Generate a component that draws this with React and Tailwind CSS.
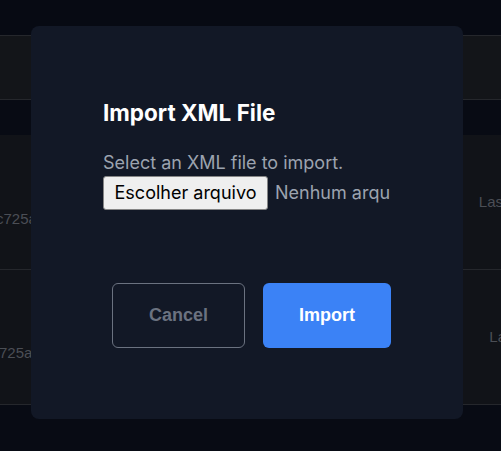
export default function App() {
  const bgText = "text-[#4b4e55] text-[15px] [font-family:'Liberation_Sans',Arial,sans-serif]";
  return (
    <div className="relative w-[501px] h-[451px] overflow-hidden bg-[#080b14] [font-family:Inter,'Noto_Sans',sans-serif]">
      {/* background page */}
      <div className="flex flex-col">
        <div className="h-[36px] bg-[#070a13] border-b border-[#25272c]" />
        <div className="h-[64px] bg-[#131519] border-b border-[#25272c]" />
        <div className="h-[35px] bg-[#080b14]" />
        <div className="h-[135px] bg-[#111318] border-b border-[#25272c] flex items-center justify-between">
          <span className={`${bgText} -ml-[4px] mt-[34px]`}>c725a</span>
          <span className={`${bgText} -mr-[2px]`}>Las</span>
        </div>
        <div className="h-[135px] bg-[#111318] border-b border-[#25272c] flex items-center justify-between">
          <span className={`${bgText} -ml-[1px] mt-[32px]`}>725a</span>
          <span className={`${bgText} -mr-[5px]`}>La</span>
        </div>
        <div className="flex-1 h-[46px] bg-[#0f121a]" />
      </div>

      {/* modal */}
      <div className="absolute left-[31px] top-[26px] w-[432px] h-[393px] rounded-lg bg-[#121826] px-[72px] pt-[71px]">
        <h2 className="text-[22.5px] leading-[31.5px] font-bold text-white">Import XML File</h2>
        <p className="mt-[20px] text-[18px] leading-[27px] text-[#9ca3af]">Select an XML file to import.</p>
        <div className="flex items-center w-[287px] overflow-hidden whitespace-nowrap">
          <span className="shrink-0 w-[165px] h-[34px] flex items-center justify-center rounded-[3px] border border-[#858585] bg-[#efefef] text-black text-[18px]">
            Escolher arquivo
          </span>
          <span className="ml-[7px] text-[18px] text-[#9ca3af]">Nenhum arquivo escolhido</span>
        </div>
        <div className="mt-[73px] flex justify-end gap-[18px] [font-family:'Liberation_Sans',Arial,sans-serif]">
          <button className="w-[133px] h-[65px] rounded-md border border-[#6b7280] text-[#6b7280] font-bold text-[18px]">
            Cancel
          </button>
          <button className="w-[128px] h-[65px] rounded-md bg-[#3b82f6] text-white font-bold text-[18px]">
            Import
          </button>
        </div>
      </div>
    </div>
  );
}
